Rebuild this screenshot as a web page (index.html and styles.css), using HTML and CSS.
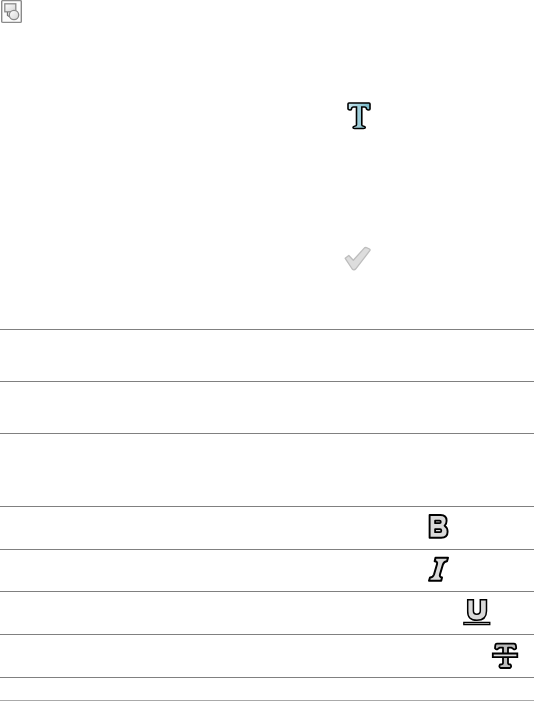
FILE: index.html
```html
<!DOCTYPE html>
<html lang="en">
  <head>
    <meta charset="UTF-8" />
    <meta name="viewport" content="width=device-width, initial-scale=1.0" />
    <title>Text tools</title>
    <link rel="stylesheet" href="styles.css">
  </head>
  <body>
    <section class="tools">
      <svg class="icon shapes" width="24" height="24" viewBox="0 0 24 24">
        <defs>
          <linearGradient id="shade" x1="0" y1="0" x2="1" y2="1">
            <stop offset="0" stop-color="#fff" />
            <stop offset="1" stop-color="#d4d4d4" />
          </linearGradient>
        </defs>
        <rect x="1.700" y=".6" width="19.600" height="21.800" rx="1" fill="#fcfcfc" stroke="#8a8a8a" stroke-width="1.400" />
        <rect x="4.800" y="3.800" width="11" height="8" fill="url(#shade)" stroke="#8a8a8a" stroke-width="1.300" />
        <path d="M7.500 12v3.500l2.500 1.500" fill="none" stroke="#777" stroke-width="1.300" />
        <circle cx="14" cy="15" r="4.700" fill="url(#shade)" stroke="#8a8a8a" stroke-width="1.300" />
      </svg>
      <svg class="icon text" width="26" height="30" viewBox="0 0 26 30">
        <defs>
          <linearGradient id="blue" x1="0" x2="1">
            <stop offset="0" stop-color="#c9e6ee" />
            <stop offset="1" stop-color="#72b6c6" />
          </linearGradient>
        </defs>
        <path d="M3 2h20q1 0 1 1v5q0 1-1.300 1T20.500 8q-.2-2-2-2H15.800V24q0 1 2 1.200 1.500.3 1.500 1.300T17.500 27.500h-9Q7 27.500 7 26.500t1.500-1.300q2-.2 2-1.200V6H7.500q-1.800 0-2 2-.2 1-1.400 1T2 8V3q0-1 1-1Z" fill="url(#blue)" stroke="#000" stroke-width="1.600" />
      </svg>
      <svg class="icon check" width="28" height="26" viewBox="0 0 28 26">
        <path d="M2.200 12.300 5.800 9.500 10.300 14.200 21.500 1.900Q22.500 1.200 23.500 1.700L26.500 3Q27.500 3.700 26.800 4.700L12.800 22.800Q11 24.800 9.200 23Z" fill="#ddd" stroke="#bdbdbd" stroke-width="1.300" stroke-linejoin="round" />
      </svg>
    </section>
    <section class="row tall"></section>
    <section class="row tall"></section>
    <section class="row empty"></section>
    <section class="row">
      <svg class="icon bold" width="23" height="27" viewBox="-.6 -.7 23 27">
        <path d="M2 1.300H13q6 0 6 5.700 0 3.500-2 5Q20 14 20 18q0 6-6.500 6H2Z" fill="#d9d9d9" stroke="#000" stroke-width="1.900" stroke-linejoin="round" />
        <path d="M7.500 7h4.500q1.200 0 1.200 1.200T12 9.500H7.500ZM7.500 15.500h5q1.200 0 1.200 1.500t-1.200 1.500h-5Z" fill="#ddd" stroke="#000" stroke-width="1.800" stroke-linejoin="round" />
      </svg>
    </section>
    <section class="row short">
      <svg class="icon italic" width="23" height="27" viewBox="-.5 -.3 23 27">
        <path d="M8 1.500H20.500L19.500 5q-3 .2-4 3L12.500 18q-.8 2.800 2 3.200l-.8 3.300H1.500l1-3.300q3 0 4-3L9.500 8q.8-2.800-2.300-3Z" fill="#d9d9d9" stroke="#000" stroke-width="2" stroke-linejoin="round" />
      </svg>
    </section>
    <section class="row">
      <svg class="icon underline" width="28" height="28" viewBox="0 0 28 28">
        <path d="M4.700 1.700h5.700V13q0 3.200 3.400 3.200T17.300 13V1.700h6.200V13q0 9.300-9.600 9.300T4.700 13Z" fill="#d9d9d9" stroke="#000" stroke-width="1.500" />
        <path d="M.8 24.500h26v2.200H.8Z" fill="#ddd" stroke="#000" stroke-width="1.300" />
      </svg>
    </section>
    <section class="row">
      <svg class="icon strike" width="28" height="28" viewBox="0 0 28 28">
        <path d="M6 1.700h17q1.700 0 2 2.300l.2 2.300q-1.300 2-3 .5L20.500 5.700H17V21q0 1.500 2.500 1.500 1.500 2.200-.5 3.500H9.500q-2-1.300-.5-3.500 3 0 3-1.500V5.700H8.500L7 6.800q-1.700 1.500-3-.5L4.200 4q.2-2.300 1.800-2.300Z" fill="#bbb" stroke="#000" stroke-width="1.800" stroke-linejoin="round" />
        <path d="M1.800 11.500h24.500v3.700H1.800Z" fill="#ddd" stroke="#000" stroke-width="1.800" />
      </svg>
    </section>
    <section class="row last"></section>
  </body>
</html>
```
FILE: styles.css
```css
* {
  box-sizing: border-box;
}

body {
  margin: 0;
  background-color: #fff;
}

.icon {
  display: block;
  flex: none;
}

.tools {
  display: flex;
  flex-direction: column;
  height: 330px;
  border-bottom: 1px solid #808080;
}

.text {
  margin: 77px 0 0 346px;
}

.check {
  margin: 115px 0 0 343px;
}

.row {
  display: flex;
  height: 43px;
  padding-top: 6px;
  border-bottom: 1px solid #808080;
}

.tall {
  height: 52px;
}

.empty {
  height: 73px;
}

.short {
  height: 42px;
}

.last {
  height: 23px;
  border-bottom-color: #aaa;
}

.bold {
  margin-left: 427px;
}

.italic {
  margin-left: 427px;
}

.underline {
  margin-left: 463px;
}

.strike {
  margin: 1px 0 0 491px;
}
```
